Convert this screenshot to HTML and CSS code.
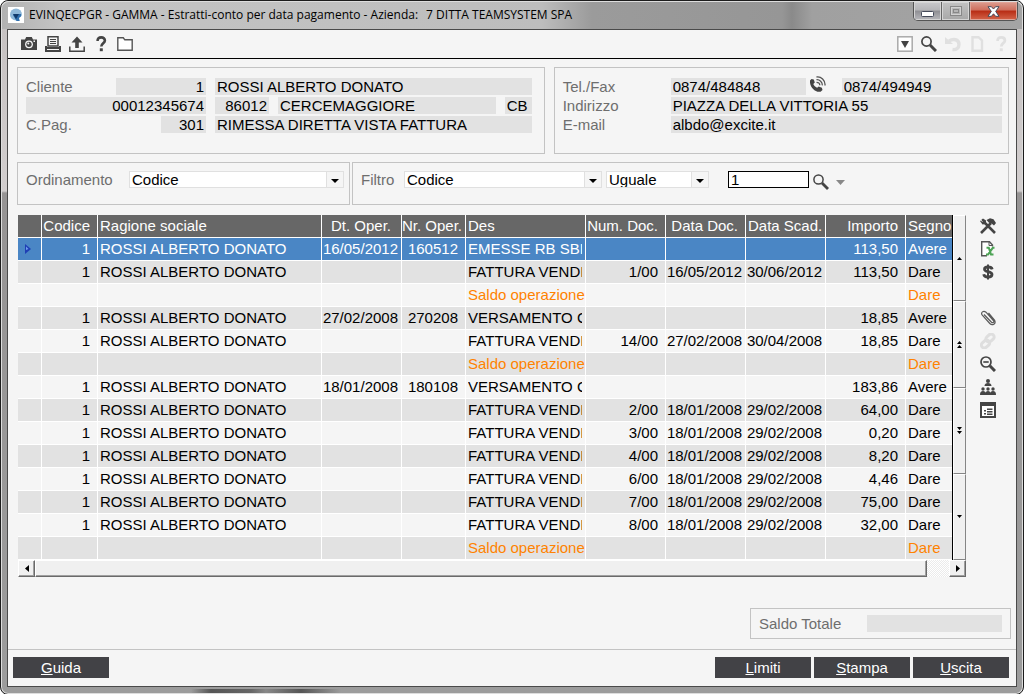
FILE: index.html
```html
<!DOCTYPE html>
<html lang="it">
<head>
<meta charset="utf-8">
<title>EVINQECPGR - GAMMA - Estratti-conto per data pagamento</title>
<link rel="stylesheet" href="styles.css">
</head>
<body>
<div class="window">
  <header class="titlebar">
    <svg class="app-icon" viewBox="0 0 16 16" width="16" height="16"><rect width="16" height="16" fill="#fff"/><circle cx="8" cy="7.500" r="6" fill="#8fb8d9"/><path d="M6 7h7v7H8.500L5 8z" fill="#2f6fae"/><path d="M5 7h6l-3 5z" fill="#123a6b"/><path d="M11 11l4-3v6l-3 1z" fill="#fff"/></svg>
    <h1 class="title"><span>EVINQECPGR - GAMMA - Estratti-conto per data pagamento - Azienda:</span><span>7 DITTA TEAMSYSTEM SPA</span></h1>
    <div class="window-controls">
      <button class="wc wc-min" aria-label="Riduci a icona"><svg width="13" height="6" viewBox="0 0 13 6"><rect x=".5" y=".5" width="12" height="5" rx="1" fill="#fff" stroke="#454a5a"/></svg></button>
      <button class="wc wc-max" aria-label="Ingrandisci" disabled><svg width="12" height="10" viewBox="0 0 12 10"><rect x="1" y="1" width="10" height="8" fill="none" stroke="#d2d2d2" stroke-width="2"/><rect x=".5" y=".5" width="11" height="9" fill="none" stroke="#888"/><rect x="3.500" y="3.500" width="5" height="3" fill="#b5b5b5" stroke="#888"/></svg></button>
      <button class="wc wc-close" aria-label="Chiudi"><svg width="13" height="11" viewBox="0 0 13 11"><path d="M1 .7h3.400l2.100 2.300L8.600.7H12L8.700 5.400 12 10.300H8.600L6.500 7.800l-2.100 2.500H1l3.300-4.900z" fill="#fff" stroke="#454a5a"/></svg></button>
    </div>
  </header>

  <div class="client">
    <nav class="toolbar">
      <div class="tools">
        <button class="tool" aria-label="Cattura"><svg viewBox="0 0 16 16"><path d="M0 3.500h4L5.200 1h5.600L12 3.500h4V14H0z" fill="#444"/><circle cx="8" cy="8.300" r="3.900" fill="#f5f5f5"/><circle cx="8" cy="8.300" r="2.600" fill="#444"/><circle cx="7.300" cy="7.500" r="1" fill="#f5f5f5"/><path d="M12.500 4.500h1.500v1.500h-1.500z" fill="#f5f5f5"/></svg></button>
        <button class="tool" aria-label="Stampa"><svg viewBox="0 0 16 16"><path d="M3 .8h10V10H3z" fill="#f5f5f5" stroke="#444" stroke-width="1.500"/><path d="M5 3.500h6M5 5.500h6M5 7.500h6" stroke="#444"/><path d="M0 10h2v1h12v-1h2v6H0z" fill="#444"/><path d="M2 13.500h12" stroke="#f5f5f5"/></svg></button>
        <button class="tool" aria-label="Esporta"><svg viewBox="0 0 16 16"><path d="M8 .5l5.500 6h-3.700V12H6.200V6.500H2.500z" fill="#444"/><path d="M.8 10.500v4.700h14.400v-4.700" fill="none" stroke="#444" stroke-width="1.500"/></svg></button>
        <button class="tool" aria-label="Aiuto"><svg viewBox="0 0 16 16"><path d="M4.600 5C4.400 2.500 6 1.400 8.200 1.400c2.300 0 3.700 1.200 3.700 3 0 2.700-3.600 2.900-3.600 6" fill="none" stroke="#444" stroke-width="2.600"/><rect x="6.800" y="12.300" width="3" height="2.900" fill="#444"/></svg></button>
        <button class="tool" aria-label="Cartella"><svg viewBox="0 0 16 16"><path d="M.8 1.800h5.500l1.500 2h7.400v10.500H.8z" fill="#fff" stroke="#555" stroke-width="1.400"/></svg></button>
      </div>
      <div class="tools">
        <button class="tool" aria-label="Menu"><svg viewBox="0 0 16 16"><rect x=".8" y=".8" width="14.400" height="14.400" fill="#fff" stroke="#aaa" stroke-width="1.500"/><path d="M4 5h8l-4 7z" fill="#444"/></svg></button>
        <button class="tool" aria-label="Cerca"><svg viewBox="0 0 16 16"><circle cx="5.500" cy="5.500" r="4.600" fill="none" stroke="#444" stroke-width="1.700"/><path d="M9 9l6 6" stroke="#444" stroke-width="3"/></svg></button>
        <button class="tool" aria-label="Annulla" disabled><svg viewBox="0 0 16 16"><path d="M4 5c4-2.500 10-2 10 3.500 0 4-3 5.500-6.500 5" fill="none" stroke="#e0e0e0" stroke-width="3.400"/><path d="M0 1l8 7H0z" fill="#e0e0e0"/></svg></button>
        <button class="tool" aria-label="Nuovo" disabled><svg viewBox="0 0 16 16"><path d="M3.500 1.200h6l3.500 3.300v10.300H3.500z" fill="none" stroke="#e0e0e0" stroke-width="2.400"/></svg></button>
        <button class="tool" aria-label="Guida campo" disabled><svg viewBox="0 0 16 16"><path d="M4.600 5C4.400 2.500 6 1.400 8.200 1.400c2.300 0 3.700 1.200 3.700 3 0 2.700-3.600 2.900-3.600 6" fill="none" stroke="#e0e0e0" stroke-width="2.800"/><rect x="6.800" y="12.300" width="3" height="2.900" fill="#e0e0e0"/></svg></button>
      </div>
    </nav>

    <main class="content">
      <div class="panels">
        <section class="panel customer">
          <div class="line">
            <div class="lead"><label for="cliente">Cliente</label><input class="field num w90" id="cliente" value="1" readonly></div>
            <input class="field grow" aria-label="Ragione sociale" value="ROSSI ALBERTO DONATO" readonly>
          </div>
          <div class="line">
            <div class="lead"><input class="field num grow" aria-label="Partita IVA" value="00012345674" readonly></div>
            <input class="field num w54" aria-label="CAP" value="86012" readonly>
            <input class="field grow" aria-label="Comune" value="CERCEMAGGIORE" readonly>
            <input class="field w27" aria-label="Provincia" value="CB" readonly>
          </div>
          <div class="line">
            <div class="lead"><label for="cpag">C.Pag.</label><input class="field num w45" id="cpag" value="301" readonly></div>
            <input class="field grow" aria-label="Descrizione pagamento" value="RIMESSA DIRETTA VISTA FATTURA" readonly>
          </div>
        </section>
        <section class="panel contact">
          <div class="line tight">
            <label class="contact-label" for="tel">Tel./Fax</label>
            <input class="field w135" id="tel" value="0874/484848" readonly>
            <button class="phone" aria-label="Chiama"><svg viewBox="0 0 16 16" width="16" height="16"><path d="M0 4.500L1.500 3l2.300.5 1 3-1.500 1.500c.8 1.700 2 2.900 3.800 3.800l1.600-1.400 3.200 1.300.6 2.300-1.900 1.700C5 17-.8 10.500 0 4.500z" fill="#444"/><path d="M6.500 1c4.500-.8 9 3.200 8.500 8.500M6.500 3.700c3.200-.3 6 2.300 5.800 5.700M6.500 6.300c1.800 0 3.300 1.300 3.300 3" fill="none" stroke="#555" stroke-width="1.300"/></svg></button>
            <input class="field grow" aria-label="Fax" value="0874/494949" readonly>
          </div>
          <div class="line tight"><label class="contact-label" for="ind">Indirizzo</label><input class="field grow" id="ind" value="PIAZZA DELLA VITTORIA 55" readonly></div>
          <div class="line tight"><label class="contact-label" for="mail">E-mail</label><input class="field grow" id="mail" value="albdo@excite.it" readonly></div>
        </section>
      </div>

      <div class="filters">
        <section class="panel sorting">
          <label class="sort-label" for="ord">Ordinamento</label>
          <div class="combo grow"><select id="ord"><option>Codice</option></select><span class="arrow"></span></div>
        </section>
        <section class="panel filtering">
          <label class="filter-label" for="filtro">Filtro</label>
          <div class="combo w198"><select id="filtro"><option>Codice</option></select><span class="arrow"></span></div>
          <div class="combo w103"><select aria-label="Operatore"><option>Uguale</option></select><span class="arrow"></span></div>
          <input class="query" aria-label="Valore filtro" value="1">
          <button class="find" aria-label="Cerca"><svg viewBox="0 0 16 16" width="16" height="16"><circle cx="5.500" cy="5.500" r="4.600" fill="none" stroke="#444" stroke-width="1.500"/><path d="M9 9l6 6" stroke="#444" stroke-width="2.800"/></svg></button>
          <button class="find more" aria-label="Altre opzioni"><svg viewBox="0 0 9 5" width="9" height="5"><path d="M0 0h9L4.500 5z" fill="#888"/></svg></button>
        </section>
      </div>

      <div class="workspace">
        <div class="grid">
          <div class="grid-body">
            <table>
              <colgroup><col class="c-mark"><col class="c-code"><col><col class="c-80"><col class="c-64"><col class="c-120"><col class="c-80"><col class="c-80"><col class="c-80"><col class="c-80"><col class="c-sign"></colgroup>
              <thead><tr><th></th><th class="n">Codice</th><th>Ragione sociale</th><th class="n wide">Dt. Oper.</th><th class="n slim">Nr. Oper.</th><th>Des</th><th class="n">Num. Doc.</th><th class="n">Data Doc.</th><th>Data Scad.</th><th class="n">Importo</th><th>Segno</th></tr></thead>
              <tbody>
                <tr class="selected"><td class="mark"><svg viewBox="0 0 6 10" width="6" height="10"><path d="M0 0l6 5-6 5z" fill="#1f3fb5"/><path d="M1 2.500L3.500 5 1 6z" fill="#6f9cf0"/></svg></td><td class="n">1</td><td>ROSSI ALBERTO DONATO</td><td class="n date">16/05/2012</td><td class="n">160512</td><td><div class="clip">EMESSE RB SBF</div></td><td></td><td></td><td></td><td class="n">113,50</td><td>Avere</td></tr>
                <tr><td></td><td class="n">1</td><td>ROSSI ALBERTO DONATO</td><td></td><td></td><td><div class="clip">FATTURA VENDIT</div></td><td class="n">1/00</td><td class="n date">16/05/2012</td><td class="n date">30/06/2012</td><td class="n">113,50</td><td>Dare</td></tr>
                <tr class="balance"><td></td><td></td><td></td><td></td><td></td><td>Saldo operazione</td><td></td><td></td><td></td><td></td><td>Dare</td></tr>
                <tr><td></td><td class="n">1</td><td>ROSSI ALBERTO DONATO</td><td class="n date">27/02/2008</td><td class="n">270208</td><td><div class="clip">VERSAMENTO C</div></td><td></td><td></td><td></td><td class="n">18,85</td><td>Avere</td></tr>
                <tr><td></td><td class="n">1</td><td>ROSSI ALBERTO DONATO</td><td></td><td></td><td><div class="clip">FATTURA VENDIT</div></td><td class="n">14/00</td><td class="n date">27/02/2008</td><td class="n date">30/04/2008</td><td class="n">18,85</td><td>Dare</td></tr>
                <tr class="balance"><td></td><td></td><td></td><td></td><td></td><td>Saldo operazione</td><td></td><td></td><td></td><td></td><td>Dare</td></tr>
                <tr><td></td><td class="n">1</td><td>ROSSI ALBERTO DONATO</td><td class="n date">18/01/2008</td><td class="n">180108</td><td><div class="clip">VERSAMENTO C</div></td><td></td><td></td><td></td><td class="n">183,86</td><td>Avere</td></tr>
                <tr><td></td><td class="n">1</td><td>ROSSI ALBERTO DONATO</td><td></td><td></td><td><div class="clip">FATTURA VENDIT</div></td><td class="n">2/00</td><td class="n date">18/01/2008</td><td class="n date">29/02/2008</td><td class="n">64,00</td><td>Dare</td></tr>
                <tr><td></td><td class="n">1</td><td>ROSSI ALBERTO DONATO</td><td></td><td></td><td><div class="clip">FATTURA VENDIT</div></td><td class="n">3/00</td><td class="n date">18/01/2008</td><td class="n date">29/02/2008</td><td class="n">0,20</td><td>Dare</td></tr>
                <tr><td></td><td class="n">1</td><td>ROSSI ALBERTO DONATO</td><td></td><td></td><td><div class="clip">FATTURA VENDIT</div></td><td class="n">4/00</td><td class="n date">18/01/2008</td><td class="n date">29/02/2008</td><td class="n">8,20</td><td>Dare</td></tr>
                <tr><td></td><td class="n">1</td><td>ROSSI ALBERTO DONATO</td><td></td><td></td><td><div class="clip">FATTURA VENDIT</div></td><td class="n">6/00</td><td class="n date">18/01/2008</td><td class="n date">29/02/2008</td><td class="n">4,46</td><td>Dare</td></tr>
                <tr><td></td><td class="n">1</td><td>ROSSI ALBERTO DONATO</td><td></td><td></td><td><div class="clip">FATTURA VENDIT</div></td><td class="n">7/00</td><td class="n date">18/01/2008</td><td class="n date">29/02/2008</td><td class="n">75,00</td><td>Dare</td></tr>
                <tr><td></td><td class="n">1</td><td>ROSSI ALBERTO DONATO</td><td></td><td></td><td><div class="clip">FATTURA VENDIT</div></td><td class="n">8/00</td><td class="n date">18/01/2008</td><td class="n date">29/02/2008</td><td class="n">32,00</td><td>Dare</td></tr>
                <tr class="balance"><td></td><td></td><td></td><td></td><td></td><td>Saldo operazione</td><td></td><td></td><td></td><td></td><td>Dare</td></tr>
              </tbody>
            </table>
            <div class="vscroll">
              <button aria-label="Riga su"><svg viewBox="0 0 5 3" width="5" height="3"><path d="M0 3h5L2.500 0z"/></svg></button>
              <button aria-label="Pagina su"><svg viewBox="0 0 5 7" width="5" height="7"><path d="M0 3h5L2.500 0zM0 7h5L2.500 4z"/></svg></button>
              <button aria-label="Pagina giù"><svg viewBox="0 0 5 7" width="5" height="7"><path d="M0 0h5L2.500 3zM0 4h5L2.500 7z"/></svg></button>
              <button aria-label="Riga giù"><svg viewBox="0 0 5 3" width="5" height="3"><path d="M0 0h5L2.500 3z"/></svg></button>
            </div>
          </div>
          <div class="hscroll">
            <button class="step" aria-label="Scorri a sinistra"><svg viewBox="0 0 4 7" width="4" height="7"><path d="M4 0v7L0 3.500z"/></svg></button>
            <div class="thumb"></div>
            <div class="track"></div>
            <button class="step" aria-label="Scorri a destra"><svg viewBox="0 0 4 7" width="4" height="7"><path d="M0 0v7l4-3.500z"/></svg></button>
          </div>
        </div>
        <aside class="side">
          <button aria-label="Strumenti"><svg viewBox="0 0 16 16"><path d="M1 15L11 5M4 4l11 11" stroke="#444" stroke-width="2.600"/><path d="M6.500 2L10 .3l3.500 1L16 5l-2 2.500-2.500-2-2.500-.8z" fill="#444"/><path d="M0 3L3 .5l3 2V6L2.500 6.500z" fill="#444"/><path d="M0 1.500l2.500 2" stroke="#f5f5f5"/></svg></button>
          <button aria-label="Esporta in Excel"><svg viewBox="0 0 16 16"><path d="M12.500 5.500V4L9.500.8H1.700v13.900H7" fill="#fff" stroke="#555" stroke-width="1.400"/><path d="M9 1v3.500h3.500" fill="none" stroke="#555"/><path d="M6.500 6.800h2.300l2.200 6.700h2.500M14.500 6.800h-1.700L8 13.500H6" fill="none" stroke="#4da355" stroke-width="2"/></svg></button>
          <button aria-label="Valuta"><svg viewBox="0 0 16 16"><path d="M12.200 5.300C11.700 3.500 10 3 8 3c-2 0-3.500.7-3.500 2.200C4.500 8.500 12 6.800 12 10.500c0 1.700-1.700 2.500-4 2.500s-3.900-.8-4.300-2.800" fill="none" stroke="#444" stroke-width="2.800"/><path d="M8 .5v15" stroke="#444" stroke-width="2"/></svg></button>
          <button class="after-gap" aria-label="Allegati"><svg viewBox="0 0 16 16"><path d="M4 4.500l7.500 7.700c1.500 1.300 3-.3 1.900-1.700L6 2.200C3.500 0 .3 2.500 2.300 5.200l7.500 8.300c2.500 2.400 6.700.5 4.700-3.400L8.500 3" fill="none" stroke="#5a5a5a" stroke-width="1.200"/></svg></button>
          <button aria-label="Collegamenti" disabled><svg viewBox="0 0 16 16"><g fill="none" stroke="#dedede" stroke-width="3"><rect x="5.500" y="2" width="9" height="6" rx="3" transform="rotate(-42 10 5)"/><rect x="1" y="8" width="9" height="6" rx="3" transform="rotate(-42 5.500 11)"/></g></svg></button>
          <button aria-label="Zoom indietro"><svg viewBox="0 0 16 16"><circle cx="6" cy="6" r="5" fill="none" stroke="#444" stroke-width="1.700"/><path d="M3.300 6h5.400" stroke="#444" stroke-width="1.600"/><path d="M9.800 9.800L15 15" stroke="#444" stroke-width="3"/></svg></button>
          <button aria-label="Struttura"><svg viewBox="0 0 16 16"><g fill="#444"><circle cx="8" cy="2" r="2"/><path d="M4.500 7c0-2 1.500-3 3.500-3s3.500 1 3.500 3z"/><circle cx="3" cy="10" r="1.700"/><circle cx="8" cy="10" r="1.700"/><circle cx="13" cy="10" r="1.700"/><path d="M0 16c0-3 1-4 3-4s2.500 1 2.500 2c0-1 .8-2 2.500-2s2.500 1 2.500 2c0-1 .5-2 2.500-2s3 1 3 4z"/></g></svg></button>
          <button aria-label="Dettaglio"><svg viewBox="0 0 16 16"><path d="M1 2v13h14V2" fill="#fff" stroke="#444" stroke-width="2"/><path d="M0 0h16v4H0zM4 8h2v1.500H4zM4 11h2v1.500H4zM7 6.500h5.500V8H7zM7 9h5.500v1.500H7zM7 11.500h5.500V13H7z" fill="#444"/></svg></button>
        </aside>
      </div>

      <section class="total">
        <label for="saldo">Saldo Totale</label>
        <input class="field w135" id="saldo" value="" readonly>
      </section>
    </main>

    <footer class="actions">
      <button class="action"><u>G</u>uida</button>
      <div class="group">
        <button class="action"><u>L</u>imiti</button>
        <button class="action"><u>S</u>tampa</button>
        <button class="action"><u>U</u>scita</button>
      </div>
    </footer>
  </div>
</div>
</body>
</html>
```
FILE: styles.css
```css
* { box-sizing: border-box; }

body {
  margin: 0;
  background: #fff;
  color: #000;
  font: 15px/17px "Liberation Sans", Arial, sans-serif;
}

button, input, select {
  margin: 0;
  padding: 0;
  border: 0;
  border-radius: 0;
  background: none;
  color: inherit;
  font: inherit;
}

button {
  display: flex;
  align-items: center;
  justify-content: center;
}

svg { display: block; }
label { color: #6e6e6e; }

/* Window frame */
.window {
  display: flex;
  flex-direction: column;
  min-height: 100vh;
  padding: 0 6px 7px;
  border: 1px solid #1c1c1c;
  border-radius: 8px;
  background:
    linear-gradient(90deg, transparent 190px, #555 210px, #666 250px, #888 265px, #555 300px, transparent 340px) bottom / 100% 5px no-repeat,
    linear-gradient(#c4c0c0 0, #d2cece 190px, #969494 192px, #9c9c9c 100%);
  box-shadow: inset 0 0 0 1px #ddd;
}

.titlebar {
  display: flex;
  align-items: flex-start;
  height: 28px;
  margin: 0 -5px;
  padding-left: 6px;
  border-top: 1px solid #ddd;
  border-radius: 7px 7px 0 0;
  background: linear-gradient(90deg, #b2b2b2, #c4c4c4 60px, #bdbdbd 540px, #9b9b9b 590px, #969696 780px, #8a8a8a 790px, #a0a0a0 810px, #a4a4a4);
}

.app-icon { margin-top: 5px; }

.title {
  display: flex;
  gap: 8px;
  flex: 1;
  margin: 4px 0 0 5px;
  font: 12px/18px "Open Sans", "Noto Sans", sans-serif;
  white-space: nowrap;
}

.window-controls {
  display: flex;
  margin-right: 4px;
  border: 1px solid #555;
  border-top: 0;
  border-radius: 0 0 5px 5px;
  overflow: hidden;
}

.wc {
  width: 28px;
  height: 18px;
  border-right: 1px solid #666;
  background: linear-gradient(#c9c9cc, #b5b5b8 45%, #8f8f94 50%, #b8b8bc);
  box-shadow: inset 0 0 0 1px #d5d5d5;
}

.wc-min { padding-top: 5px; }
.wc-max { background: linear-gradient(#c2c2c2, #a8a8a8); }

.wc-close {
  width: 47px;
  border-right: 0;
  background: linear-gradient(#dc9d90, #cf6e5c 45%, #b82c14 50%, #d4654a);
  box-shadow: inset 0 0 0 1px #e0a498;
}

.client {
  display: flex;
  flex-direction: column;
  flex: 1;
  border: 1px solid #4a4a4a;
  background: #f5f5f5;
}

/* Toolbar */
.toolbar {
  display: flex;
  justify-content: space-between;
  padding: 6px 7px 6px 13px;
  border-bottom: 1px solid #000;
}

.tools { display: flex; gap: 8px; }
.tool, .tool svg { width: 16px; height: 16px; }

/* Panels */
.content {
  display: flex;
  flex-direction: column;
  flex: 1;
}

.panels, .filters {
  display: flex;
  padding: 0 7px 0 9px;
}

.panels { gap: 9px; margin-top: 8px; }
.filters { gap: 2px; margin-top: 8px; }

.panel { min-width: 0; border: 1px solid #c3c3c3; }

.customer, .contact {
  display: flex;
  flex-direction: column;
  gap: 2px;
  height: 87px;
  padding: 10px 0 0 8px;
}

.customer { flex: 526 1 0; padding-right: 12px; }
.contact { flex: 457 1 0; padding-right: 6px; }

.line { display: flex; gap: 9px; }
.tight { gap: 0; }

.lead {
  display: flex;
  justify-content: space-between;
  width: 180px;
}

.contact-label { width: 108px; }

.field {
  min-width: 0;
  height: 17px;
  padding: 0 2px;
  background: #e2e2e2;
}

.num { text-align: right; }
.grow { flex: 1; }
.w27 { width: 27px; }
.w45 { width: 45px; }
.w54 { width: 54px; }
.w90 { width: 90px; }
.w103 { width: 103px; }
.w135 { width: 135px; }
.w198 { width: 198px; }

.phone { width: 36px; height: 17px; padding: 0 12px 6px 0; }

/* Sorting and filtering */
.sorting, .filtering {
  display: flex;
  height: 43px;
  padding: 8px 5px 0 8px;
}

.sorting { width: 333px; }
.filtering { flex: 1; }
.sort-label { width: 103px; }
.filter-label { width: 43px; }

.combo {
  display: grid;
  grid-template-columns: 1fr 17px;
  height: 17px;
  margin-right: 4px;
  border: 1px solid #e0e0e0;
  background: #fff;
}

.sorting .combo { margin-right: 0; }

.combo select {
  grid-area: 1 / 1 / 2 / 3;
  height: 15px;
  padding-left: 2px;
  appearance: none;
  line-height: 15px;
}

.arrow {
  grid-area: 1 / 2;
  border-left: 1px solid #e0e0e0;
  background: #f5f5f5;
  pointer-events: none;
}

.arrow::after {
  content: "";
  display: block;
  width: 0;
  margin: 7px auto 0;
  border: solid transparent;
  border-width: 4px 4px 0;
  border-top-color: #000;
}

.query {
  width: 81px;
  height: 17px;
  margin-left: 15px;
  padding: 0 2px;
  border: 1px solid #000;
  background: #fff;
  line-height: 15px;
}

.find { height: 22px; margin-left: 4px; }
.more { margin-left: 7px; }

/* Results grid */
.workspace {
  display: flex;
  margin-top: 10px;
  padding: 0 20px 0 10px;
}

.grid { flex: 1; min-width: 0; }
.grid-body { display: flex; }

table {
  flex: 1;
  width: 100%;
  border-spacing: 0;
  border-right: 1px solid #000;
  table-layout: fixed;
}

.c-mark { width: 24px; }
.c-code { width: 56px; }
.c-64 { width: 64px; }
.c-80 { width: 80px; }
.c-120 { width: 120px; }
.c-sign { width: 46px; }

th, td {
  height: 23px;
  padding: 0 0 0 2px;
  border-right: 1px solid #fff;
  border-bottom: 1px solid #fff;
  line-height: 22px;
  text-align: left;
  white-space: nowrap;
}

th:last-child, td:last-child { border-right: 0; }
th { background: #676767; color: #fff; font-weight: normal; }

tbody tr:nth-child(even) { background: #e2e2e2; }
tbody .selected { background: #4a86c5; color: #fff; }
tbody .balance { color: #ff8200; }

.n { padding: 0 7px 0 0; text-align: right; }
.date { padding-right: 3px; }
.wide { padding-right: 10px; }
.slim { padding-right: 3px; }
.mark { padding-left: 7px; }
.clip { margin-right: 3px; overflow: hidden; }

.vscroll {
  display: flex;
  flex-direction: column;
  width: 13px;
}

.vscroll button {
  flex: 1;
  border: 1px solid #fff;
  border-right-color: #858585;
  border-bottom-color: #858585;
  background: #f0f0f0;
}

.hscroll { display: flex; height: 17px; }

.step, .thumb {
  border: 1px solid #fff;
  border-right-color: #6a6a6a;
  border-bottom-color: #6a6a6a;
  background: #f0f0f0;
  box-shadow: inset -1px -1px #a0a0a0;
}

.step { width: 17px; }
.thumb { flex: 1; }

.track {
  width: 22px;
  background: repeating-conic-gradient(#fff 0 25%, #ebebeb 0 50%) 0 0 / 2px 2px;
}

.side {
  display: flex;
  flex-direction: column;
  margin-left: 14px;
}

.side button { width: 16px; height: 23px; padding-bottom: 2px; }
.side svg { width: 16px; height: 16px; }
.side .after-gap { margin-top: 23px; }

/* Total */
.total {
  display: flex;
  align-self: flex-end;
  justify-content: space-between;
  width: 261px;
  margin: 31px 5px 10px 0;
  padding: 6px 8px;
  border: 1px solid #c3c3c3;
}

/* Footer */
.actions {
  display: flex;
  justify-content: space-between;
  margin-top: auto;
  padding: 7px 7px 8px 5px;
  border-top: 1px solid #c3c3c3;
}

.group { display: flex; gap: 3px; }

.action {
  width: 96px;
  height: 21px;
  background: #424246;
  color: #fff;
}
```
